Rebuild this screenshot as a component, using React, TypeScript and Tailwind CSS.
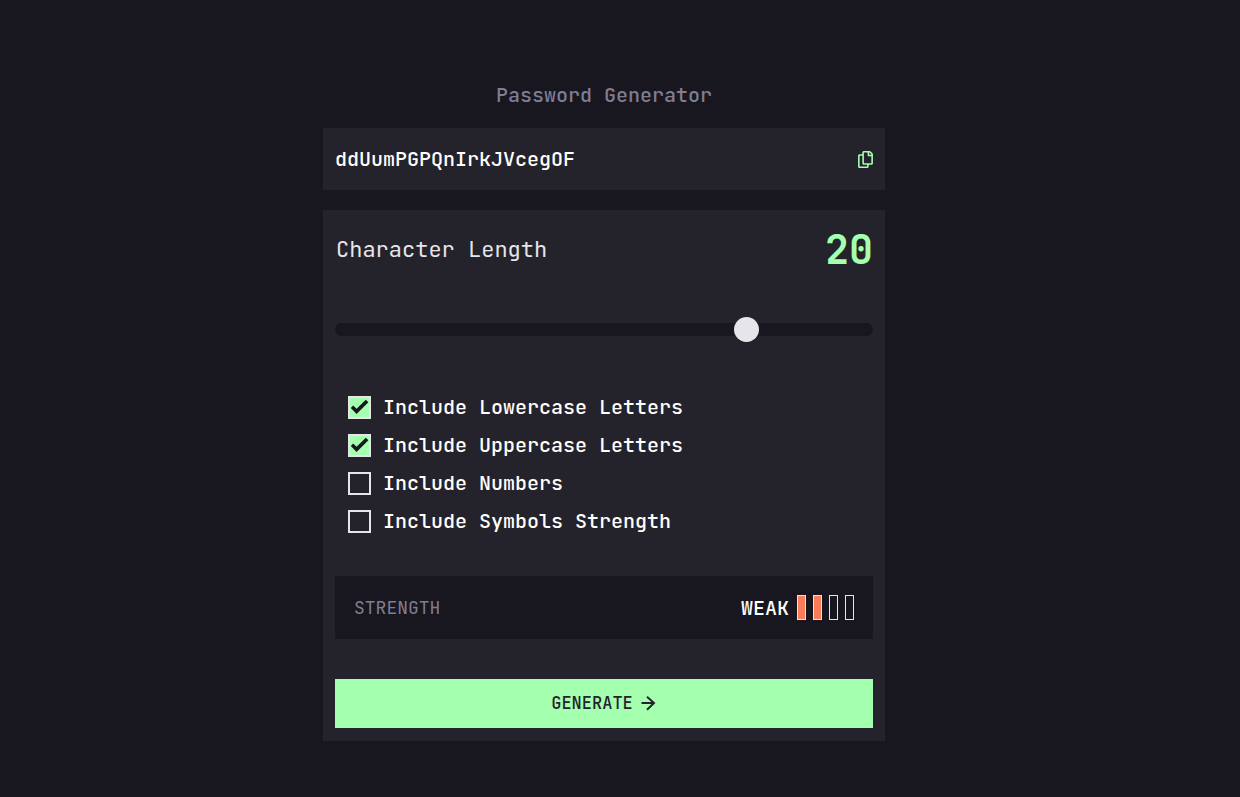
import { useState } from "react";
import { FaRegCopy } from "react-icons/fa";

const options = [
  { id: "lowercase", label: "Include Lowercase Letters", on: true },
  { id: "uppercase", label: "Include Uppercase Letters", on: true },
  { id: "numbers", label: "Include Numbers", on: false },
  { id: "symbols", label: "Include Symbols Strength", on: false },
];

function Option({ id, label, on }: { id: string; label: string; on: boolean }) {
  return (
    <label htmlFor={id} className="flex items-center gap-3 text-xl leading-[30px] font-medium text-white">
      <span className="grid size-[23px] shrink-0 place-items-center">
        <input
          id={id}
          type="checkbox"
          defaultChecked={on}
          className="peer col-start-1 row-start-1 size-[23px] appearance-none border-2 border-[#e6e5ea] checked:bg-[#a4ffaf]"
        />
        <svg
          viewBox="0 0 23 23"
          aria-hidden="true"
          className="pointer-events-none invisible col-start-1 row-start-1 size-[23px] fill-[#18171f] peer-checked:visible"
        >
          <path d="M2.8 12 5.2 9.4 8.6 12.8 17.8 3.7 20.4 6.3 8.6 18Z" />
        </svg>
      </span>
      {label}
    </label>
  );
}

export default function App() {
  const [length, setLength] = useState(20);
  return (
    <div className="min-h-screen bg-[#18171f] pt-20 pr-8 pb-14 font-['JetBrains_Mono','DejaVu_Sans_Mono',monospace]">
      <main className="mx-auto flex w-full max-w-[562px] flex-col">
        <h1 className="text-center text-xl leading-[30px] font-medium text-[#817d92]">Password Generator</h1>

        <section className="mt-[18px] flex h-[62px] items-center justify-between bg-[#24232c] px-3 text-xl font-medium text-white">
          <span>ddUumPGPQnIrkJVcegOF</span>
          <button type="button" aria-label="Copy password" className="flex text-[#a4ffaf]">
            <FaRegCopy className="h-[17px] w-[15px]" />
          </button>
        </section>

        <section className="mt-5 flex flex-col bg-[#24232c] px-3 pt-3 pb-[13px]">
          <div className="flex h-14 items-center justify-between pl-px text-[#e6e5ea]">
            <label htmlFor="length" className="text-[22px] leading-8">Character Length</label>
            <output htmlFor="length" className="text-[40px] leading-none font-bold text-[#a4ffaf]">{length}</output>
          </div>

          <input
            id="length"
            type="range"
            min={6}
            max={24}
            value={length}
            onChange={(e) => setLength(Number(e.target.value))}
            className="my-[45px] h-[13px] w-full appearance-none rounded-full bg-[#18171f] [&::-webkit-slider-thumb]:size-[25px] [&::-webkit-slider-thumb]:appearance-none [&::-webkit-slider-thumb]:rounded-full [&::-webkit-slider-thumb]:bg-[#e6e5ea]"
          />

          <div className="mt-[11px] flex flex-col gap-2 px-[13px]">
            {options.map((o) => (
              <Option key={o.id} {...o} />
            ))}
          </div>

          <div className="mt-10 flex h-[63px] items-center justify-between bg-[#18171f] px-[19px]">
            <span className="text-lg text-[#817d92]">STRENGTH</span>
            <div className="flex items-center gap-2 text-xl font-medium text-white">
              <span>WEAK</span>
              <div className="flex gap-[7px]">
                <span className="h-[25px] w-[9px] border border-[#e6e5ea] bg-[#fb7c58]" />
                <span className="h-[25px] w-[9px] border border-[#e6e5ea] bg-[#fb7c58]" />
                <span className="h-[25px] w-[9px] border border-[#e6e5ea]" />
                <span className="h-[25px] w-[9px] border border-[#e6e5ea]" />
              </div>
            </div>
          </div>

          <button
            type="button"
            className="mt-10 flex h-[49px] items-center justify-center gap-2 bg-[#a4ffaf] text-[17px] font-medium text-[#24232c]"
          >
            GENERATE
            <svg viewBox="0 0 16 16" aria-hidden="true" className="size-4 fill-none stroke-current stroke-2">
              <path d="M0.5 7H13.5M6 0.8 13 7 6 13.8" />
            </svg>
          </button>
        </section>
      </main>
    </div>
  );
}
